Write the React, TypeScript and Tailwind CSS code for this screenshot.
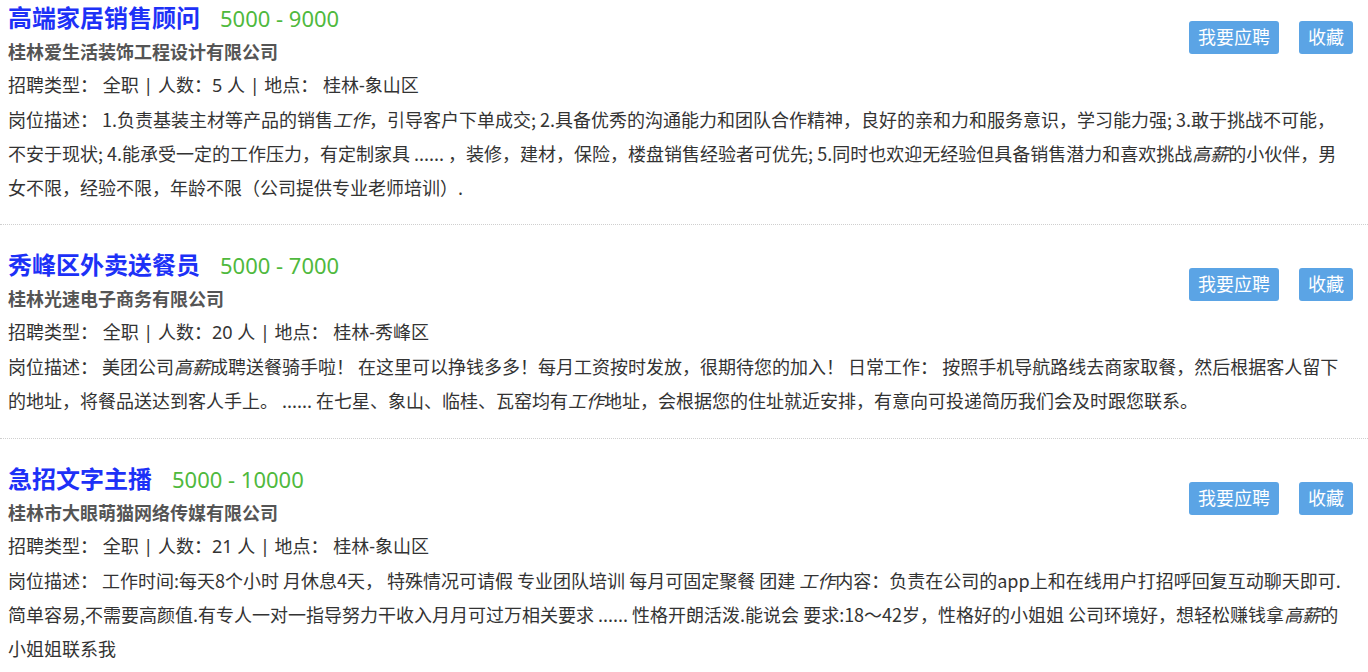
import React from "react";

type Seg = string | { em: string };

interface Job {
  title: string;
  salary: string;
  company: string;
  count: string;
  place: string;
  desc: Seg[][];
}

const jobs: Job[] = [
  {
    title: "高端家居销售顾问",
    salary: "5000 - 9000",
    company: "桂林爱生活装饰工程设计有限公司",
    count: "5",
    place: "桂林-象山区",
    desc: [
      [
        "1.负责基装主材等产品的销售",
        { em: "工作" },
        "，引导客户下单成交; 2.具备优秀的沟通能力和团队合作精神，良好的亲和力和服务意识，学习能力强; 3.敢于挑战不可能，",
      ],
      [
        "不安于现状; 4.能承受一定的工作压力，有定制家具 ...... ，装修，建材，保险，楼盘销售经验者可优先; 5.同时也欢迎无经验但具备销售潜力和喜欢挑战",
        { em: "高薪" },
        "的小伙伴，男",
      ],
      ["女不限，经验不限，年龄不限（公司提供专业老师培训）."],
    ],
  },
  {
    title: "秀峰区外卖送餐员",
    salary: "5000 - 7000",
    company: "桂林光速电子商务有限公司",
    count: "20",
    place: "桂林-秀峰区",
    desc: [
      [
        "美团公司",
        { em: "高薪" },
        "成聘送餐骑手啦！ 在这里可以挣钱多多！每月工资按时发放，很期待您的加入！ 日常工作： 按照手机导航路线去商家取餐，然后根据客人留下",
      ],
      [
        "的地址，将餐品送达到客人手上。 ...... 在七星、象山、临桂、瓦窑均有",
        { em: "工作" },
        "地址，会根据您的住址就近安排，有意向可投递简历我们会及时跟您联系。",
      ],
    ],
  },
  {
    title: "急招文字主播",
    salary: "5000 - 10000",
    company: "桂林市大眼萌猫网络传媒有限公司",
    count: "21",
    place: "桂林-象山区",
    desc: [
      [
        "工作时间:每天8个小时 月休息4天， 特殊情况可请假 专业团队培训 每月可固定聚餐 团建 ",
        { em: "工作" },
        "内容：负责在公司的app上和在线用户打招呼回复互动聊天即可.",
      ],
      [
        "简单容易,不需要高颜值.有专人一对一指导努力干收入月月可过万相关要求 ...... 性格开朗活泼.能说会 要求:18～42岁，性格好的小姐姐 公司环境好，想轻松赚钱拿",
        { em: "高薪" },
        "的",
      ],
      ["小姐姐联系我"],
    ],
  },
];

function renderSegs(segs: Seg[]) {
  return segs.map((s, k) =>
    typeof s === "string" ? (
      <React.Fragment key={k}>{s}</React.Fragment>
    ) : (
      <em key={k} className="italic">
        {s.em}
      </em>
    )
  );
}

export default function App() {
  return (
    <div
      className="w-[1368px] h-[672px] overflow-hidden bg-white text-[#333]"
      style={{ fontFamily: '"Noto Sans", "Noto Sans CJK SC", sans-serif' }}
    >
      {jobs.map((job, i) => (
        <div
          key={i}
          className={
            i === 0
              ? "pl-2 pr-2 pt-0 pb-5 border-b border-dotted border-[#cfcfcf]"
              : "pl-2 pr-2 pt-[22px] pb-[21px] border-b border-dotted border-[#cfcfcf]"
          }
        >
          <div className="float-right mr-[7px] mt-[21px] flex">
            <button className="h-[33px] px-[9px] rounded-[3px] bg-[#5ba4e5] text-white text-[18px] leading-[33px]">
              我要应聘
            </button>
            <button className="ml-5 h-[33px] px-[9px] rounded-[3px] bg-[#5ba4e5] text-white text-[18px] leading-[33px]">
              收藏
            </button>
          </div>
          <div className="flex items-baseline h-[36px] leading-[36px] overflow-hidden">
            <span className="text-[24px] font-bold text-[#1d31f7]">{job.title}</span>
            <span className="ml-5 text-[22px] text-[#4fb93d]">{job.salary}</span>
          </div>
          <div className="text-[18px] leading-[33px] font-bold text-[#555]">{job.company}</div>
          <div className="text-[18px] leading-[33px]">
            招聘类型： 全职 | 人数：{job.count} 人 | 地点： {job.place}
          </div>
          <div
            className="text-[18px] leading-[34px]"
            style={{ fontFamily: '"Noto Sans CJK SC", "Noto Sans", sans-serif' }}
          >
            岗位描述：{" "}
            {job.desc.map((line, li) => (
              <React.Fragment key={li}>
                {li > 0 && <br />}
                {renderSegs(line)}
              </React.Fragment>
            ))}
          </div>
        </div>
      ))}
    </div>
  );
}
